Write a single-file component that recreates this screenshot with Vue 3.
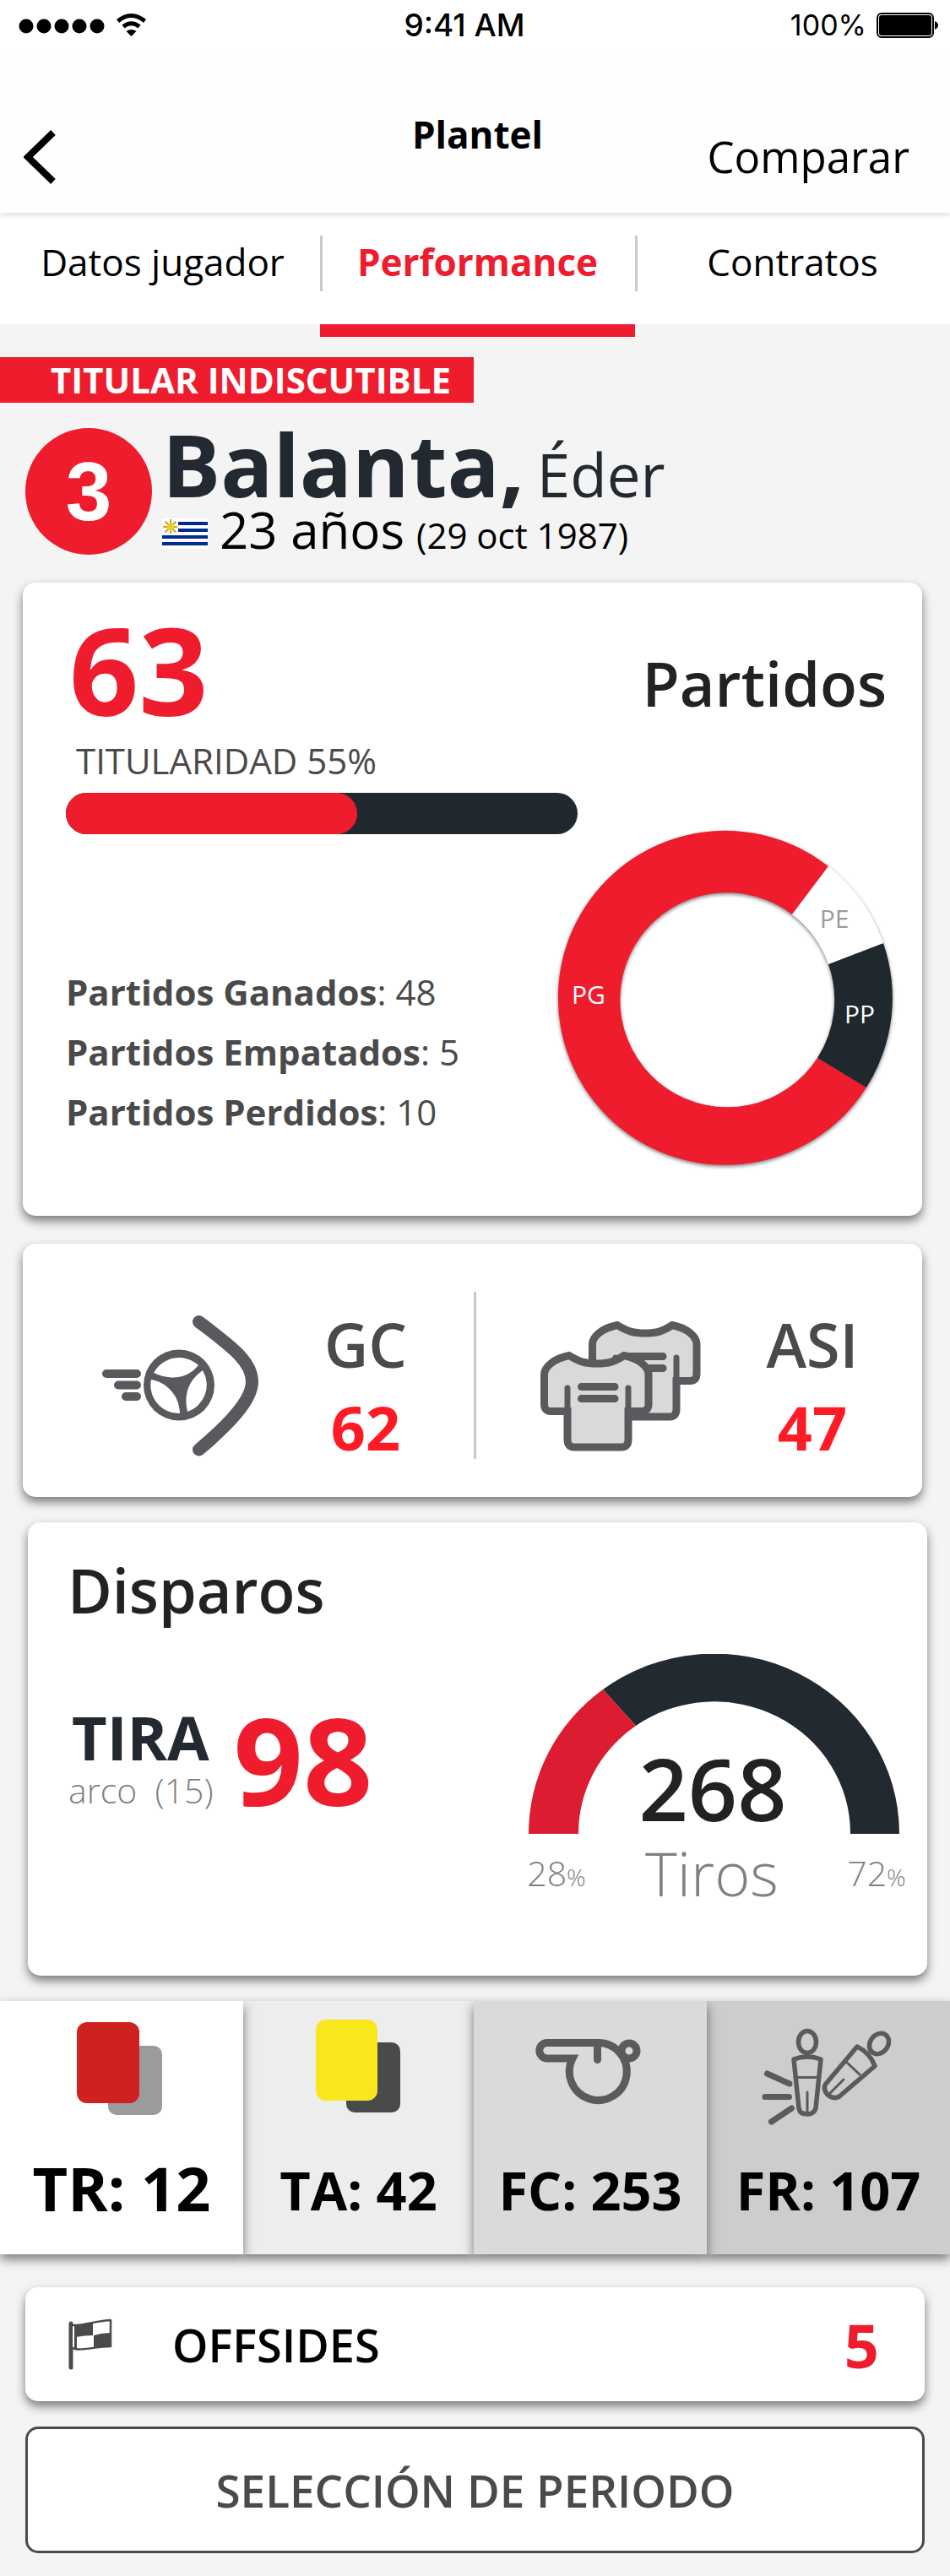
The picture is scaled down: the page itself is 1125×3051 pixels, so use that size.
<script setup>
const tabs = [
  { label: 'Datos jugador', active: false },
  { label: 'Performance', active: true },
  { label: 'Contratos', active: false },
]
const starts = 55
const record = [
  { label: 'Partidos Ganados', value: 48 },
  { label: 'Partidos Empatados', value: 5 },
  { label: 'Partidos Perdidos', value: 10 },
]
</script>

<template>
  <div class="screen">
    <div class="status">
      <svg class="signal" viewBox="22 14 152 32" aria-hidden="true">
        <circle v-for="n in 5" :key="n" :cx="10 + n * 21" cy="31" r="8.5" />
        <path class="wave" d="M139.500 25Q155.500 12 171.500 25M146 31.500Q155.500 24 165 31.500" />
        <path d="M155.500 43L149.500 37Q155.500 33 161.500 37Z" />
      </svg>
      <span class="clock">9:41 AM</span>
      <div class="power">
        <span>100%</span>
        <svg class="battery" viewBox="1038 15 74 32" aria-hidden="true">
          <rect class="shell" x="1039" y="17" width="66" height="28" rx="5" />
          <rect x="1041" y="19" width="62" height="24" rx="3" />
          <path d="M1107 26Q1111 28 1111 31T1107 36Z" />
        </svg>
      </div>
    </div>

    <header class="topbar">
      <button class="back" aria-label="Volver">
        <svg viewBox="0 0 40 64" aria-hidden="true"><path d="M35 3L5 32L35 61" /></svg>
      </button>
      <h1>Plantel</h1>
      <button class="compare">Comparar</button>
    </header>

    <nav class="tabs">
      <a v-for="tab in tabs" :key="tab.label" href="#" :class="{ active: tab.active }">{{ tab.label }}</a>
    </nav>

    <div class="badge">TITULAR INDISCUTIBLE</div>

    <section class="player">
      <span class="number">3</span>
      <div>
        <h2>Balanta, <span>Éder</span></h2>
        <p class="age">
          <svg class="flag" viewBox="0 0 54 36" aria-hidden="true">
            <rect width="54" height="36" fill="#fff" />
            <path d="M19 4h35v4H19zM19 12h35v4H19zM0 20h54v4H0zM0 28h54v4H0z" fill="#002b93" />
            <path d="M10 1v17M1 10h17M3.500 3.500l13 13M16.500 3.500l-13 13" stroke="#c9a526" stroke-width="2" />
            <circle cx="10" cy="10" r="4" fill="#efcf1d" />
          </svg>
          <span>23 años</span> <small>(29 oct 1987)</small>
        </p>
      </div>
    </section>

    <section class="card matches">
      <div class="matches-head">
        <strong class="big">63</strong>
        <h3>Partidos</h3>
      </div>
      <p class="starter">TITULARIDAD {{ starts }}%</p>
      <div class="bar"><div class="fill" :style="{ width: starts + 2 + '%' }"></div></div>
      <div class="matches-body">
        <ul>
          <li v-for="item in record" :key="item.label"><b>{{ item.label }}</b>: {{ item.value }}</li>
        </ul>
        <svg class="donut" viewBox="656 984 406 406" role="img" aria-label="Partidos ganados, empatados y perdidos">
          <g class="ring">
            <path fill="#ee1c2c" d="M981 1026A198 198 0 1 0 1026 1288L968 1253A127 127 0 1 1 938 1083Z" />
            <path fill="#1e282d" d="M1046 1117A198 198 0 0 1 1026 1288L968 1253A127 127 0 0 0 981 1142Z" />
            <path fill="#fff" d="M981 1026A198 198 0 0 1 1046 1117L981 1142A127 127 0 0 0 938 1083Z" />
          </g>
          <text x="697" y="1189" fill="#fff">PG</text>
          <text x="988" y="1099" fill="#9b9b9b">PE</text>
          <text x="1018" y="1212" fill="#fff">PP</text>
        </svg>
      </div>
    </section>

    <section class="card duo">
      <div class="metric first">
        <svg class="shot" viewBox="120 1559 186 168" aria-hidden="true">
          <path class="net" d="M235.500 1567.500C270 1594 298.500 1613 298.500 1638.500C298.500 1661 270 1690 235.500 1719" />
          <path class="dash" d="M126 1629H162M140 1642.500H162M149 1656H162" />
          <circle cx="212" cy="1642.500" r="42" fill="#5a595d" />
          <path fill="#fff" d="M182 1628A34 34 0 0 1 235 1619C226 1630 214 1634 203 1633.500C195 1633 188 1631 182 1628ZM179 1636C198 1639 213 1656 213 1676A33.500 33.500 0 0 1 179 1636ZM240 1625C224 1636 217 1653 222 1674A33.500 33.500 0 0 0 240 1625Z" />
        </svg>
        <div class="pair"><span>GC</span><b>62</b></div>
      </div>
      <i class="rule"></i>
      <div class="metric second">
        <svg class="shirts" viewBox="640 1566 191 157" aria-hidden="true">
          <g v-for="(offset, i) in ['translate(57 -36)', 'translate(0 0)']" :key="i" :transform="offset">
            <path class="shirt" d="M674 1608.500C656 1612 644.500 1622 644.500 1631V1666Q644.500 1674.500 652 1674.500H672V1708Q672 1717 680 1717H736Q744 1717 744 1708V1674.500H760Q768 1674.500 768 1666V1631C768 1622 757 1612 739 1608.500C728 1616 720 1618 707 1618S686 1616 674 1608.500Z" />
            <path class="seam" d="M672 1647V1680M744 1647V1680" />
            <path class="lines" d="M688.500 1645.500H728M688.500 1659.500H728" />
          </g>
        </svg>
        <div class="pair"><span>ASI</span><b>47</b></div>
      </div>
    </section>

    <section class="card shots">
      <h3>Disparos</h3>
      <div class="shots-body">
        <div class="target">
          <div>
            <b>TIRA</b>
            <span>arco&nbsp; (15)</span>
          </div>
          <strong class="big">98</strong>
        </div>
        <svg class="gauge" viewBox="620 1959 460 320" role="img" aria-label="268 tiros, 28% y 72%">
          <path fill="#222930" d="M714 2001A219.500 213 0 0 1 1065 2172H1007A161 156 0 0 0 753 2044Z" />
          <path fill="#dc1c30" d="M626 2172A219.500 213 0 0 1 714 2001L753 2044A161 156 0 0 0 685 2172Z" />
          <text class="total" x="844" y="2157">268</text>
          <text class="unit" x="843" y="2246">Tiros</text>
          <text class="share" x="659" y="2234">28<tspan>%</tspan></text>
          <text class="share" x="1038" y="2234">72<tspan>%</tspan></text>
        </svg>
      </div>
    </section>

    <section class="tiles">
      <div class="tile red">
        <svg viewBox="64 2390 160 130" aria-hidden="true">
          <rect x="128" y="2423" width="64" height="82" rx="10" fill="#9b9b9b" />
          <rect x="91" y="2395" width="74" height="96" rx="12" fill="#ce2120" />
        </svg>
        <b>TR: 12</b>
      </div>
      <div class="tile yellow">
        <svg viewBox="345 2390 160 130" aria-hidden="true">
          <rect x="410" y="2419" width="64" height="83" rx="10" fill="#4a4a4a" />
          <rect x="374" y="2392" width="73" height="96" rx="12" fill="#f8e71d" />
        </svg>
        <b>TA: 42</b>
      </div>
      <div class="tile committed">
        <svg viewBox="619 2390 160 130" aria-hidden="true">
          <g fill="none" stroke="#5b5b5d" stroke-width="9">
            <path d="M707.500 2419.500H648A9 9 0 0 0 648 2438H678A34 34 0 1 0 707.500 2419.500" />
            <circle cx="745" cy="2429" r="9" />
            <path stroke-linecap="round" d="M707.500 2421V2439.500" />
          </g>
        </svg>
        <b>FC: 253</b>
      </div>
      <div class="tile received">
        <svg viewBox="902 2390 160 130" aria-hidden="true">
          <g fill="none" stroke="#5b5b5d" stroke-width="5.500" stroke-linecap="round" stroke-linejoin="round">
            <ellipse cx="957" cy="2418.500" rx="10.500" ry="13" />
            <path d="M941 2439Q957 2433 973 2439L967 2497Q965 2504 957 2504Q948 2504 947 2497Z" />
            <path stroke-width="3" d="M945 2460.500H969M957 2478V2503" />
            <ellipse cx="1042" cy="2420.500" rx="10.500" ry="13" transform="rotate(38 1042 2420.500)" />
            <path d="M1016 2424Q1031 2431 1037 2447L995 2483Q988 2487 981 2481Q975 2474 979 2468Z" />
            <path stroke-width="3" d="M1003 2442L1019 2457M1000 2463L983 2480" />
            <path stroke-width="7" d="M909.500 2456L936 2468M907 2483.500H935.500M914.500 2513L938.500 2497" />
          </g>
        </svg>
        <b>FR: 107</b>
      </div>
    </section>

    <section class="card offsides">
      <svg viewBox="80 2746 54 64" aria-hidden="true">
        <path fill="none" stroke="#4a4a4a" stroke-width="5" stroke-linecap="round" d="M84 2753V2805" />
        <path fill="#fff" stroke="#4a4a4a" stroke-width="2.500" stroke-linejoin="round" d="M86 2755H90C104 2754 116 2749.500 131 2749V2780C116 2780 104 2784 91 2783.500L86 2782" />
        <path fill="#4a4a4a" d="M90 2755C98 2754 104 2753 110 2751.500V2767Q100 2767 90 2769ZM111 2767Q121 2764 131 2764V2780Q121 2780 111 2782ZM88 2754h3v29h-3z" />
      </svg>
      <span>OFFSIDES</span>
      <b>5</b>
    </section>

    <button class="period">SELECCIÓN DE PERIODO</button>
  </div>
</template>

<style>
body {
  margin: 0;
  background: #f4f4f4;
}
</style>

<style scoped>
* {
  box-sizing: border-box;
}
.screen {
  font-family: 'Open Sans', 'Noto Sans', sans-serif;
  color: #000;
  background: #f4f4f4;
  padding-bottom: 26px;
  overflow: hidden;
}
h1, h2, h3, p, ul {
  margin: 0;
  padding: 0;
  list-style: none;
}
button {
  border: 0;
  padding: 0;
  background: none;
  font: inherit;
  color: inherit;
}
svg {
  display: block;
  flex: none;
}
.status {
  display: flex;
  justify-content: space-between;
  align-items: center;
  height: 60px;
  padding: 0 13px 0 22px;
  background: #fff;
  font: 400 34px/56px Inter, sans-serif;
}
.signal {
  width: 152px;
  height: 32px;
}
.wave {
  fill: none;
  stroke: #000;
  stroke-width: 5;
}
.clock {
  margin-right: 10px;
  font-size: 37px;
  font-weight: 500;
}
.power {
  display: flex;
  align-items: center;
  gap: 12px;
}
.battery {
  width: 74px;
  height: 32px;
}
.shell {
  fill: none;
  stroke: #000;
  stroke-width: 2;
}
.topbar {
  position: relative;
  display: grid;
  grid-template-columns: 1fr auto 1fr;
  align-items: center;
  height: 192px;
  padding: 60px 48px 0 54px;
  background: #fefefe;
  box-shadow: 0 3px 6px rgba(0, 0, 0, 0.12);
}
.back {
  width: 40px;
  margin-left: -26px;
}
.back svg {
  width: 40px;
  height: 64px;
  fill: none;
  stroke: #000;
  stroke-width: 8;
}
h1 {
  margin-bottom: 54px;
  font-size: 44px;
  line-height: 44px;
}
.compare {
  justify-self: end;
  margin-bottom: 2px;
  font-size: 51px;
  line-height: 50px;
}
.tabs {
  display: grid;
  grid-template-columns: repeat(3, 1fr);
  height: 132px;
  padding-left: 6px;
  background: #fff;
}
.tabs a {
  position: relative;
  display: flex;
  justify-content: center;
  align-items: center;
  padding-bottom: 16px;
  color: #000;
  font-size: 44px;
  text-decoration: none;
}
.tabs a + a::before {
  content: '';
  position: absolute;
  left: 0;
  top: 27px;
  width: 3px;
  height: 66px;
  background: #cacaca;
}
.tabs .active {
  color: #ee1c2c;
  font-weight: 700;
}
.tabs .active::after {
  content: '';
  position: absolute;
  left: 0;
  right: 0;
  bottom: -15px;
  height: 15px;
  background: #ee1c2c;
}
.badge {
  width: 561px;
  margin-top: 39px;
  padding-left: 60px;
  background: #ee1c2c;
  color: #fff;
  font-size: 42px;
  font-weight: 700;
  line-height: 54px;
}
.player {
  display: flex;
  align-items: flex-start;
  gap: 12px;
  margin: 30px 30px 33px;
}
.number {
  width: 150px;
  height: 150px;
  border-radius: 50%;
  background: #ee1c2c;
  color: #fff;
  font: 700 98px/150px 'Liberation Sans', sans-serif;
  text-align: center;
}
h2 {
  color: #222930;
  font-size: 103px;
  line-height: 84px;
}
h2 span {
  margin-left: -12px;
  font-size: 71px;
  font-weight: 400;
  line-height: 56px;
}
.age {
  display: flex;
  align-items: baseline;
  gap: 14px;
  margin-top: 6px;
  font-size: 60px;
  line-height: 60px;
}
.age small {
  font-size: 42px;
  line-height: 42px;
}
.flag {
  width: 54px;
  height: 36px;
}
.card {
  border-radius: 15px;
  background: #fff;
  box-shadow: 0 6px 12px rgba(0, 0, 0, 0.5);
}
h3 {
  color: #222;
  font-size: 72px;
  font-weight: 600;
  line-height: 72px;
}
.big {
  color: #ee1c2c;
  font-size: 144px;
  line-height: 144px;
}
.matches {
  height: 750px;
  margin: 0 33px 0 27px;
  padding: 30px 30px 0 51px;
  color: #4a4a4a;
}
.matches-head {
  display: flex;
  justify-content: space-between;
  padding: 0 12px 0 4px;
}
.matches-head h3 {
  margin-top: 53px;
}
.starter {
  margin: 15px 0 16px 12px;
  font-size: 42px;
  line-height: 44px;
}
.bar {
  width: 606px;
  height: 49px;
  border-radius: 25px;
  background: #212930;
}
.fill {
  height: 49px;
  border-radius: 25px;
  background: #ee1c2c;
}
.matches-body {
  display: flex;
  justify-content: space-between;
  margin-top: -4px;
}
.matches ul {
  padding-top: 155px;
  font-size: 42px;
  line-height: 71px;
}
.donut {
  width: 406px;
  height: 406px;
  overflow: visible;
  font-size: 30px;
  text-anchor: middle;
}
.ring {
  filter: drop-shadow(0 2px 2px rgba(0, 0, 0, 0.5));
}
.duo {
  display: grid;
  grid-template-columns: 534fr 3px 528fr;
  align-items: center;
  height: 300px;
  margin: 33px 33px 30px 27px;
  padding-top: 12px;
}
.metric {
  display: flex;
  align-items: center;
  padding-top: 24px;
}
.first {
  gap: 76px;
  padding-left: 93px;
}
.second {
  gap: 80px;
  padding-left: 76px;
}
.rule {
  width: 3px;
  height: 198px;
  background: #cacaca;
}
.shot {
  width: 186px;
  height: 168px;
}
.net {
  fill: none;
  stroke: #5a595d;
  stroke-width: 15;
  stroke-linecap: round;
}
.dash {
  fill: none;
  stroke: #5a595d;
  stroke-width: 10;
  stroke-linecap: round;
}
.shirts {
  width: 191px;
  height: 157px;
}
.shirt {
  fill: #d9d9d9;
  stroke: #5a595d;
  stroke-width: 9;
}
.seam {
  fill: none;
  stroke: #5a595d;
  stroke-width: 7;
  stroke-linecap: round;
}
.lines {
  fill: none;
  stroke: #5a5a5a;
  stroke-width: 9;
  stroke-linecap: round;
}
.pair {
  display: flex;
  flex-direction: column;
  width: 102px;
  align-items: center;
  font-size: 72px;
  line-height: 98px;
}
.pair span {
  color: #4a4a4a;
  font-weight: 600;
}
.pair b {
  color: #ff1b25;
}
.shots {
  height: 537px;
  margin: 0 27px 30px 33px;
  padding: 44px 18px 0 47px;
}
.shots-body {
  display: flex;
  justify-content: space-between;
  margin-top: 40px;
}
.target {
  display: flex;
  align-items: flex-start;
  gap: 24px;
  padding-top: 52px;
}
.target div {
  display: flex;
  flex-direction: column;
  gap: 6px;
  margin-top: 10px;
}
.target b {
  padding-left: 5px;
  color: #222930;
  font-size: 72px;
  line-height: 72px;
}
.target span {
  padding-left: 1px;
  color: #808080;
  font-size: 41px;
  font-weight: 300;
  line-height: 42px;
}
.gauge {
  width: 460px;
  height: 320px;
  text-anchor: middle;
}
.total {
  fill: #222;
  font-size: 102px;
  font-weight: 600;
}
.unit {
  fill: #808080;
  font-size: 72px;
  font-weight: 300;
}
.share {
  fill: #808080;
  font-size: 41px;
  font-weight: 300;
}
.share tspan {
  font-size: 28px;
}
.tiles {
  display: grid;
  grid-template-columns: 288fr 273fr 276fr 288fr;
}
.tile {
  position: relative;
  display: flex;
  flex-direction: column;
  align-items: center;
  gap: 35px;
  height: 300px;
  padding-top: 20px;
  box-shadow: 0 6px 12px rgba(0, 0, 0, 0.5);
  font-size: 63px;
  line-height: 78px;
}
.tile svg {
  width: 160px;
  height: 130px;
}
.red {
  z-index: 1;
  background: #fff;
  font-size: 72px;
  line-height: 72px;
}
.yellow {
  background: #ededed;
}
.committed {
  z-index: 1;
  background: #dadada;
}
.received {
  background: #cdcdcd;
}
.offsides {
  display: flex;
  align-items: center;
  height: 135px;
  margin: 39px 30px 30px;
  padding: 0 54px 0 50px;
}
.offsides svg {
  width: 54px;
  height: 64px;
}
.offsides span {
  flex: 1;
  padding-left: 70px;
  font-size: 54px;
  font-weight: 600;
}
.offsides b {
  color: #ee1c2c;
  font-size: 72px;
  line-height: 72px;
}
.period {
  display: block;
  width: calc(100% - 60px);
  height: 150px;
  margin: 0 30px;
  border: 3px solid #4a4a4a;
  border-radius: 15px;
  background: #fff;
  color: #4a4a4a;
  font-size: 53px;
  font-weight: 600;
}
</style>
